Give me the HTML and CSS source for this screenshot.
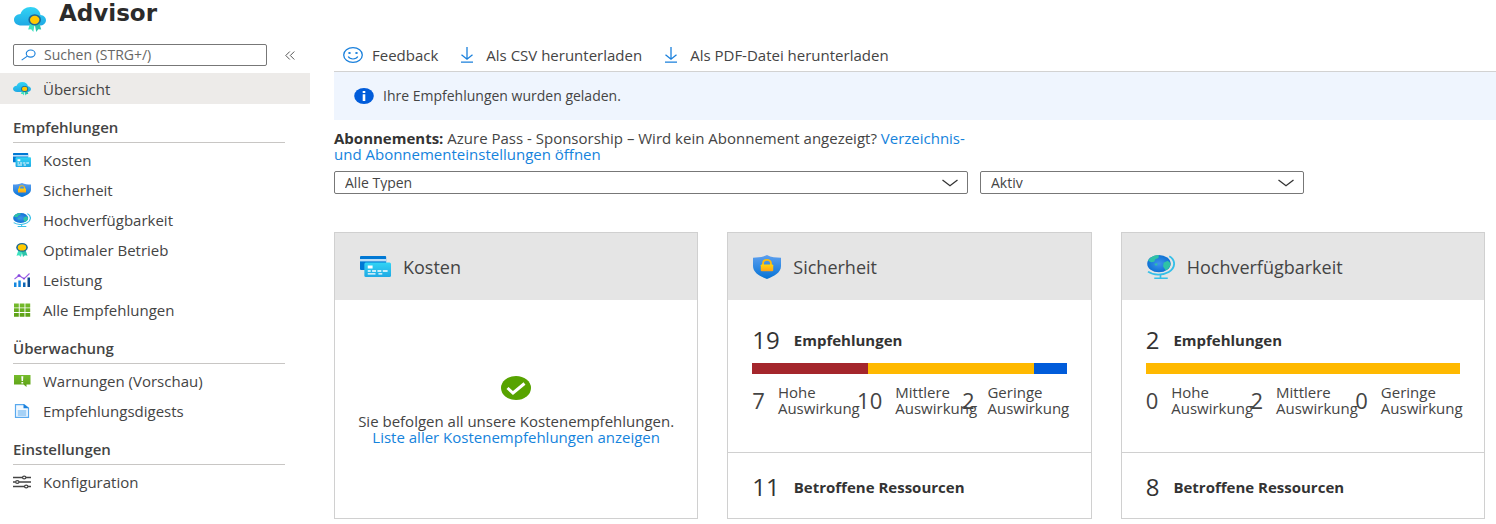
FILE: index.html
```html
<!DOCTYPE html>
<html lang="de">
<head>
<meta charset="utf-8">
<title>Advisor</title>
<link rel="stylesheet" href="styles.css">
</head>
<body>
<svg class="defs" aria-hidden="true">
  <defs>
    <linearGradient id="g-cloud" x1="0" y1="0" x2="0" y2="1"><stop offset="0" stop-color="#32d4f5"/><stop offset="1" stop-color="#1fa9e4"/></linearGradient>
    <linearGradient id="g-shield" x1="0" y1="0" x2="0" y2="1"><stop offset="0" stop-color="#5ea0ef"/><stop offset="1" stop-color="#0573d6"/></linearGradient>
    <linearGradient id="g-lock" x1="0" y1="0" x2="0" y2="1"><stop offset="0" stop-color="#ffd70f"/><stop offset="1" stop-color="#fea11b"/></linearGradient>
    <radialGradient id="g-globe"><stop offset="0" stop-color="#3f93ec"/><stop offset="1" stop-color="#0f72d4"/></radialGradient>
    <linearGradient id="g-green" x1="0" y1="0" x2="0" y2="1"><stop offset="0" stop-color="#76bc2d"/><stop offset="1" stop-color="#5b9f14"/></linearGradient>
  </defs>
  <symbol id="i-advisor" viewBox="0 0 32 26" preserveAspectRatio="none">
    <path d="M7.500 18.500C3 18.500 0 16 0 12.700C0 9.700 2.800 7.400 6.500 7.100C7.700 3 11.500 0 16.500 0C22 0 26 3.300 26.500 8C29.700 8.300 32 10.500 32 13.200C32 16.200 29.300 18.500 25.700 18.500Z" fill="url(#g-cloud)"/>
    <path d="M16.500 15L14.200 22.500L17.200 22.300L19.300 25L20.700 17Z" fill="#3de3c0"/>
    <path d="M25 15L27.200 22.500L24.300 22.300L22.200 25L20.700 17Z" fill="#2bc4aa"/>
    <ellipse cx="20.700" cy="12.800" rx="6.300" ry="5.600" fill="#1c6795"/>
    <ellipse cx="20.700" cy="12.800" rx="4.700" ry="4.100" fill="#ffca00"/>
  </symbol>
  <symbol id="i-cards" viewBox="0 0 32 21" preserveAspectRatio="none">
    <rect width="27" height="14" rx="1" fill="#0078d4"/>
    <rect y="3" width="27" height="2.400" fill="#b9def8"/>
    <rect x="4.500" y="6.500" width="27.500" height="14.500" rx="1.500" fill="url(#g-cloud)"/>
    <path d="M8 9.500h5v3h-5zM8 14.300h3v1.500h-3zM12.500 14.300h4v1.500h-4zM18 14.300h4v1.500h-4zM23.500 14.300h5v1.500h-5zM8 17.300h8v1.300h-8zM19 17.300h4v1.300h-4z" fill="#fff"/>
  </symbol>
  <symbol id="i-shield" viewBox="0 0 27 25" preserveAspectRatio="none">
    <path d="M13.500 0C17.500 2.400 22 2.800 27 2.800V11.500C27 18.500 20 22.500 13.500 25C7 22.500 0 18.500 0 11.500V2.800C5 2.800 9.500 2.400 13.500 0Z" fill="url(#g-shield)"/>
    <path d="M9.700 10.500V8.500C9.700 3.800 17.300 3.800 17.300 8.500V10.500" fill="none" stroke="#fdbb0d" stroke-width="1.800"/>
    <rect x="7.500" y="9.800" width="12" height="7.200" rx="1" fill="url(#g-lock)"/>
  </symbol>
  <symbol id="i-globe" viewBox="0 0 27 25" preserveAspectRatio="none">
    <ellipse cx="11.500" cy="9" rx="11.300" ry="9" fill="url(#g-globe)"/>
    <path d="M2 4.500C4 1.500 8 0 11.500 0L11 3L8 4.500L7 7L4 7.500L1 6ZM16 8L20 6L22.800 8.500C22.800 12 20 15 18 16L15.500 12ZM7 9L10 8.500L10 11L8 11Z" fill="#2fc2a6"/>
    <path d="M21.500 1.200C28 5.200 27.500 13.500 21 17.700C15 21.500 6 21.200 1 17.300" fill="none" stroke="#35bfe8" stroke-width="1.800"/>
    <path d="M13 20.500v3M7 24.200h13" fill="none" stroke="#35bfe8" stroke-width="1.600"/>
  </symbol>
  <symbol id="i-medal" viewBox="0 0 18 16" preserveAspectRatio="none">
    <path d="M5.500 8L3.500 14.500L6 14L8 16L9.500 9Z" fill="#3de3c0"/>
    <path d="M12.500 8L14.500 14.500L12 14L10 16L8.500 9Z" fill="#2bc4aa"/>
    <ellipse cx="9" cy="5" rx="5.800" ry="5" fill="#1c6795"/>
    <ellipse cx="9" cy="5" rx="4.200" ry="3.600" fill="#ffca00"/>
  </symbol>
  <symbol id="i-chart" viewBox="0 0 18 14" preserveAspectRatio="none">
    <path d="M1 9.500h2.500V14H1zM5.300 7.500h2.500V14H5.300z" fill="#1488df"/>
    <path d="M10 9.500h2.500V14H10z" fill="#0a64b4"/><path d="M14.500 4.500H17V14h-2.500z" fill="#0c4a8c"/>
    <path d="M1.500 6L6 2.500L11 5.800L16.500 0.500" fill="none" stroke="#9a5be6" stroke-width="1.100"/>
    <circle cx="6" cy="2.600" r="1.400" fill="#8345dc"/><circle cx="11" cy="5.600" r="1" fill="#8345dc"/>
  </symbol>
  <symbol id="i-grid" viewBox="0 0 18 14" preserveAspectRatio="none">
    <path d="M1 0.500h4.800v3.900H1zM6.700 0.500h4.800v3.900H6.700zM12.400 0.500h4.800v3.900h-4.800zM1 5.200h4.800v3.900H1zM6.700 5.200h4.800v3.900H6.700zM12.400 5.200h4.800v3.900h-4.800zM1 9.900h4.800v3.900H1zM6.700 9.900h4.800v3.900H6.700zM12.400 9.900h4.800v3.900h-4.800z" fill="url(#g-green)"/>
  </symbol>
  <symbol id="i-alert" viewBox="0 0 18 12">
    <path d="M1 0H17.500V9.500H13.500V12L10.500 9.500H1Z" fill="url(#g-green)"/>
    <path d="M8.300 1.200h2l-0.300 4.800h-1.400zM8.400 7h1.800v1.500h-1.800z" fill="#fff"/>
  </symbol>
  <symbol id="i-doc" viewBox="0 0 18 14" preserveAspectRatio="none">
    <path d="M2.500 0.600H11L15.500 4V13.400H2.500Z" fill="#f2f9ff" stroke="#59a9ee" stroke-width="1.200"/>
    <path d="M10.500 0L16 4.300H10.500Z" fill="#1a80dc"/>
    <path d="M4.700 7h8.600M4.700 9h8.600M4.700 11h8.600" stroke="#59a9ee" stroke-width="1.200"/>
  </symbol>
  <symbol id="i-sliders" viewBox="0 0 18 14" preserveAspectRatio="none">
    <path d="M0 2.500h9.500M13 2.500h5M0 7h2.500M6 7h12M0 11.500h11.500M15 11.500h3" stroke="#444" stroke-width="1.300"/>
    <g fill="#fff" stroke="#444" stroke-width="1.200"><ellipse cx="11.200" cy="2.500" rx="1.700" ry="1.400"/><ellipse cx="4.300" cy="7" rx="1.700" ry="1.400"/><ellipse cx="13.200" cy="11.500" rx="1.700" ry="1.400"/></g>
  </symbol>
  <symbol id="i-download" viewBox="0 0 14 16">
    <path d="M7 0V12M1.500 7.700L7 12.200L12.500 7.700M1 15.200H13" fill="none" stroke="#1a80dc" stroke-width="1.300"/>
  </symbol>
  <symbol id="i-chevron" viewBox="0 0 16 8">
    <path d="M0.500 1L8 6.800L15.500 1" fill="none" stroke="#333" stroke-width="1.300"/>
  </symbol>
</svg>

<div class="layout">
  <aside class="sidebar">
    <header class="brand">
      <svg class="brand-icon"><use href="#i-advisor"/></svg>
      <h1 class="brand-title">Advisor</h1>
    </header>
    <div class="search-row">
      <label class="search">
        <svg class="search-icon" viewBox="0 0 16 12"><ellipse cx="10.300" cy="4.500" rx="4.700" ry="3.800" fill="none" stroke="#1a80dc" stroke-width="1.200"/><path d="M6.800 7.200L0.700 11.500" stroke="#1a80dc" stroke-width="1.200"/></svg>
        <input class="search-input" type="text" placeholder="Suchen (STRG+/)" aria-label="Suchen">
      </label>
      <button class="collapse" type="button" aria-label="Menü einklappen"><svg class="collapse-icon" viewBox="0 0 10 9"><path d="M4.800 0.500L0.800 4.500L4.800 8.500M9.300 0.500L5.300 4.500L9.300 8.500" fill="none" stroke="#555" stroke-width="1"/></svg></button>
    </div>
    <nav class="nav">
      <a class="nav-item nav-item-active" href="#"><svg class="nav-icon"><use href="#i-advisor"/></svg>Übersicht</a>
      <h2 class="nav-heading">Empfehlungen</h2>
      <a class="nav-item" href="#"><svg class="nav-icon"><use href="#i-cards"/></svg>Kosten</a>
      <a class="nav-item" href="#"><svg class="nav-icon"><use href="#i-shield"/></svg>Sicherheit</a>
      <a class="nav-item" href="#"><svg class="nav-icon"><use href="#i-globe"/></svg>Hochverfügbarkeit</a>
      <a class="nav-item" href="#"><svg class="nav-icon"><use href="#i-medal"/></svg>Optimaler Betrieb</a>
      <a class="nav-item" href="#"><svg class="nav-icon"><use href="#i-chart"/></svg>Leistung</a>
      <a class="nav-item" href="#"><svg class="nav-icon"><use href="#i-grid"/></svg>Alle Empfehlungen</a>
      <h2 class="nav-heading">Überwachung</h2>
      <a class="nav-item" href="#"><svg class="nav-icon"><use href="#i-alert"/></svg>Warnungen (Vorschau)</a>
      <a class="nav-item" href="#"><svg class="nav-icon"><use href="#i-doc"/></svg>Empfehlungsdigests</a>
      <h2 class="nav-heading">Einstellungen</h2>
      <a class="nav-item" href="#"><svg class="nav-icon"><use href="#i-sliders"/></svg>Konfiguration</a>
    </nav>
  </aside>

  <main class="main">
    <div class="toolbar">
      <button class="tool" type="button"><svg class="tool-smile" viewBox="0 0 20 16"><ellipse cx="10" cy="8" rx="9.300" ry="7.300" fill="none" stroke="#1a80dc" stroke-width="1.300"/><path d="M5.200 9.500C7 12.800 13 12.800 14.800 9.500" fill="none" stroke="#1a80dc" stroke-width="1.200"/><ellipse cx="6.500" cy="6" rx="1.300" ry="1" fill="#1a80dc"/><ellipse cx="13.500" cy="6" rx="1.300" ry="1" fill="#1a80dc"/></svg>Feedback</button>
      <button class="tool" type="button"><svg class="tool-download"><use href="#i-download"/></svg>Als CSV herunterladen</button>
      <button class="tool" type="button"><svg class="tool-download"><use href="#i-download"/></svg>Als PDF-Datei herunterladen</button>
    </div>
    <div class="banner" role="status">
      <svg class="banner-icon" viewBox="0 0 20 16"><ellipse cx="10" cy="8" rx="9.800" ry="8" fill="#015cda"/><path d="M8.700 3h2.600v2H8.700zM8.700 6.300h2.600V13H8.700z" fill="#fff"/></svg>
      Ihre Empfehlungen wurden geladen.
    </div>
    <p class="subscriptions"><strong class="subscriptions-label">Abonnements:</strong> Azure Pass - Sponsorship – Wird kein Abonnement angezeigt? <a class="link" href="#">Verzeichnis- und Abonnementeinstellungen öffnen</a></p>
    <div class="filters">
      <div class="select"><select class="select-field" aria-label="Typ"><option>Alle Typen</option></select><svg class="select-icon"><use href="#i-chevron"/></svg></div>
      <div class="select"><select class="select-field" aria-label="Status"><option>Aktiv</option></select><svg class="select-icon"><use href="#i-chevron"/></svg></div>
    </div>
    <div class="cards">
      <section class="card">
        <header class="card-head"><svg class="card-icon card-icon-wide"><use href="#i-cards"/></svg><h2 class="card-title">Kosten</h2></header>
        <div class="card-done">
          <svg class="done-icon" viewBox="0 0 30 24"><ellipse cx="15" cy="12" rx="15" ry="12" fill="#57a300"/><path d="M6.500 12L12 17L23.500 7.500" fill="none" stroke="#fff" stroke-width="3"/></svg>
          <p class="done-text">Sie befolgen all unsere Kostenempfehlungen.</p>
          <a class="link" href="#">Liste aller Kostenempfehlungen anzeigen</a>
        </div>
      </section>
      <section class="card">
        <header class="card-head"><svg class="card-icon"><use href="#i-shield"/></svg><h2 class="card-title">Sicherheit</h2></header>
        <div class="card-body">
          <div class="total"><span class="total-number">19</span><span class="total-label">Empfehlungen</span></div>
          <div class="bar"><span class="bar-high" style="flex-grow:7"></span><span class="bar-medium" style="flex-grow:10"></span><span class="bar-low" style="flex-grow:2"></span></div>
          <div class="impacts">
            <div class="impact"><span class="impact-number">7</span><span class="impact-label">Hohe<br>Auswirkung</span></div>
            <div class="impact"><span class="impact-number">10</span><span class="impact-label">Mittlere<br>Auswirkung</span></div>
            <div class="impact"><span class="impact-number">2</span><span class="impact-label">Geringe<br>Auswirkung</span></div>
          </div>
        </div>
        <div class="card-foot total"><span class="total-number">11</span><span class="total-label">Betroffene Ressourcen</span></div>
      </section>
      <section class="card">
        <header class="card-head"><svg class="card-icon"><use href="#i-globe"/></svg><h2 class="card-title">Hochverfügbarkeit</h2></header>
        <div class="card-body">
          <div class="total"><span class="total-number">2</span><span class="total-label">Empfehlungen</span></div>
          <div class="bar"><span class="bar-medium" style="flex-grow:2"></span></div>
          <div class="impacts">
            <div class="impact"><span class="impact-number">0</span><span class="impact-label">Hohe<br>Auswirkung</span></div>
            <div class="impact"><span class="impact-number">2</span><span class="impact-label">Mittlere<br>Auswirkung</span></div>
            <div class="impact"><span class="impact-number">0</span><span class="impact-label">Geringe<br>Auswirkung</span></div>
          </div>
        </div>
        <div class="card-foot total"><span class="total-number">8</span><span class="total-label">Betroffene Ressourcen</span></div>
      </section>
    </div>
  </main>
</div>
</body>
</html>
```

FILE: styles.css
```css
* { box-sizing: border-box; }
body {
  margin: 0;
  background: #fff;
  color: #444;
  font: 15px/16px "Open Sans", "Noto Sans", sans-serif;
}
h1, h2, p { margin: 0; }
button, input, select { font: inherit; color: inherit; }
svg { flex: none; }
.defs { position: absolute; width: 0; height: 0; }
.layout { display: flex; align-items: flex-start; }
.link { color: #1583dc; text-decoration: none; }

.sidebar { flex: none; width: 310px; }
.brand { display: flex; align-items: flex-end; gap: 13px; height: 33px; padding-left: 14px; }
.brand-icon { width: 32px; height: 26px; }
.brand-title { align-self: flex-start; font: 700 23px/26px "DejaVu Sans", Verdana, sans-serif; color: #2b2b2b; }
.search-row { display: flex; align-items: center; gap: 18px; padding: 11px 0 7px 13px; }
.search {
  display: flex; align-items: center; gap: 8px;
  width: 254px; height: 22px; padding-left: 7px;
  border: 1px solid #777; border-radius: 2px;
}
.search-icon { width: 15px; height: 12px; }
.search-input { flex: 1; min-width: 0; padding: 0; border: 0; outline: 0; background: none; font-size: 14px; }
.search-input::placeholder { color: #666; opacity: 1; }
.collapse { display: flex; padding: 0; border: 0; background: none; }
.collapse-icon { width: 10px; height: 9px; }
.nav { display: flex; flex-direction: column; }
.nav-item {
  display: flex; align-items: center; gap: 12px;
  height: 30px; padding-left: 13px;
  color: #444; text-decoration: none;
}
.nav-item-active { height: 31px; background: #edebe9; }
.nav-icon { width: 18px; height: 14px; }
.nav-heading {
  margin: 0 25px 2px 13px; padding: 15px 0 7px;
  border-bottom: 1px solid #c8c6c4;
  font-size: 15px; line-height: 16px; font-weight: 600;
}

.main { flex: 1; min-width: 0; padding: 38px 0 5px 24px; }
.toolbar { display: flex; gap: 22px; height: 34px; padding-left: 9px; border-bottom: 1px solid #d2d2d2; }
.tool { display: flex; align-items: center; gap: 12px; padding: 0; border: 0; background: none; }
.tool-smile { width: 20px; height: 16px; margin-right: -3px; }
.tool-download { width: 14px; height: 16px; }
.banner { display: flex; align-items: center; gap: 9px; height: 48px; padding-left: 20px; background: #eff5fe; font-size: 14px; }
.banner-icon { width: 20px; height: 16px; }
.subscriptions { max-width: 640px; margin-top: 10px; }
.subscriptions-label { color: #333; }
.filters { display: grid; grid-template-columns: minmax(0, 634px) minmax(0, 324px); gap: 12px; margin-top: 9px; }
.select { display: grid; align-items: center; }
.select-field {
  grid-area: 1 / 1; width: 100%; height: 23px; padding: 0 10px;
  appearance: none; border: 1px solid #777; border-radius: 2px; background: #fff; font-size: 14px;
}
.select-icon { grid-area: 1 / 1; justify-self: end; width: 16px; height: 8px; margin-right: 10px; pointer-events: none; }

.cards { display: grid; grid-template-columns: repeat(3, minmax(0, 1fr)); gap: 29px; margin: 38px 11px 0 0; }
.card { display: flex; flex-direction: column; border: 1px solid #d0d0d0; }
.card-head { display: flex; align-items: center; gap: 12px; height: 67px; padding-left: 25px; background: #e5e5e5; }
.card-icon { width: 28px; height: 24px; }
.card-icon-wide { width: 31px; height: 21px; }
.card-title { font-size: 18px; line-height: 24px; font-weight: 400; }
.card-done { flex: 1; display: flex; flex-direction: column; align-items: center; padding-top: 76px; white-space: nowrap; }
.done-icon { width: 30px; height: 24px; margin-bottom: 13px; }
.card-body { height: 152px; padding: 26px 24px 0; }
.total { display: flex; align-items: center; gap: 14px; }
.total-number { font-size: 24px; line-height: 28px; color: #333; }
.total-label { font-weight: 700; color: #333; }
.bar { display: flex; height: 11px; margin-top: 9px; }
.bar-high { background: #a4262c; }
.bar-medium { background: #ffb900; }
.bar-low { background: #015cda; }
.impacts { display: grid; grid-template-columns: repeat(3, minmax(0, 1fr)); margin-top: 10px; }
.impact { display: flex; align-items: center; gap: 13px; white-space: nowrap; }
.impact-number { font-size: 22px; line-height: 28px; }
.card-foot { height: 66px; padding: 2px 24px 0; border-top: 1px solid #d0d0d0; }
```
